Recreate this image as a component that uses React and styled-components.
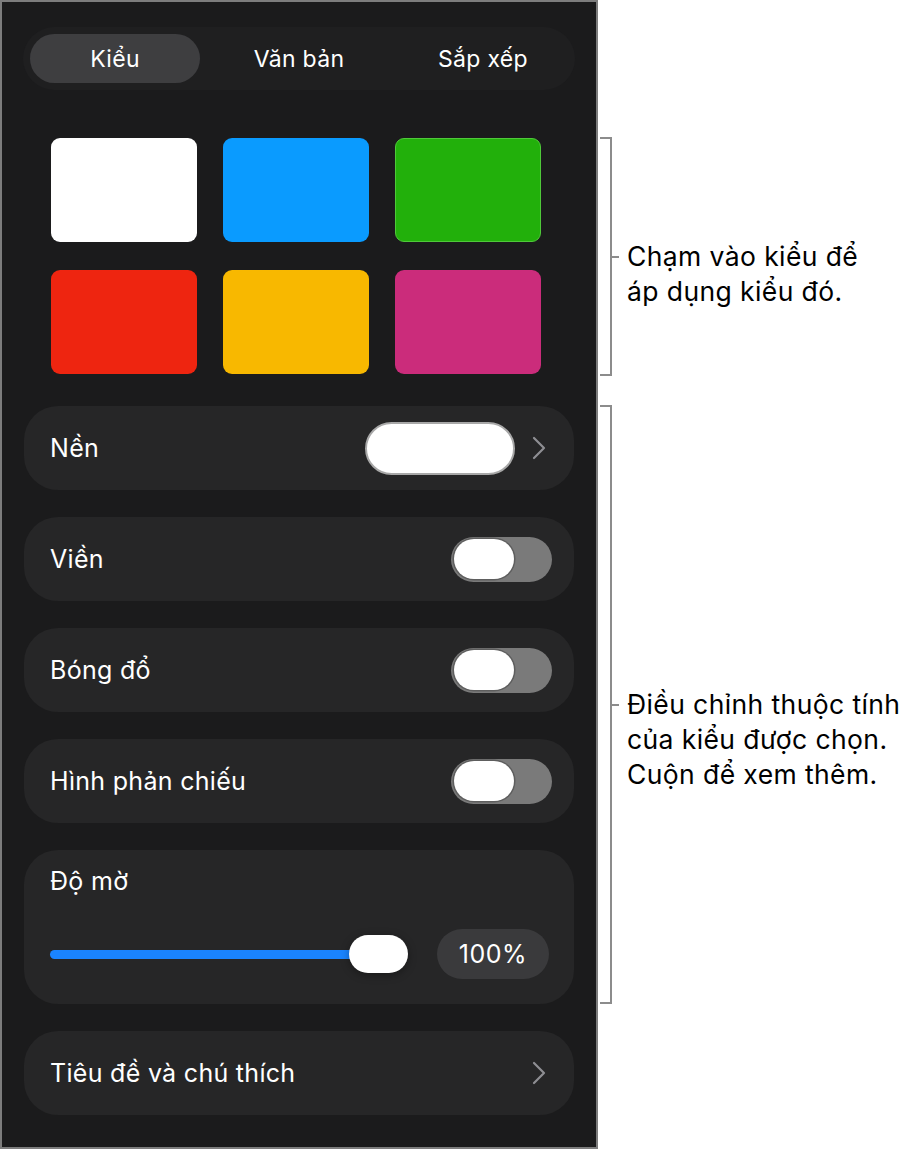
import React from "react";
import styled, { createGlobalStyle } from "styled-components";

const Global = createGlobalStyle`
  html, body { margin: 0; padding: 0; background: #ffffff; }
  body {
    font-family: Inter, "Noto Sans", "Liberation Sans", sans-serif;
    -webkit-font-smoothing: antialiased;
  }
`;

const Page = styled.div`
  display: flex;
  align-items: flex-start;
  width: 916px;
  height: 1151px;
  overflow: hidden;
`;

const Panel = styled.div`
  box-sizing: border-box;
  flex: none;
  width: 598px;
  height: 1149px;
  background: #1b1b1c;
  border: 2px solid #7d7d7d;
  padding: 25px 22px 0;
  display: flex;
  flex-direction: column;
`;

const Segmented = styled.div`
  display: grid;
  grid-template-columns: repeat(3, 1fr);
  height: 63px;
  margin: 0 -1px;
  border-radius: 32px;
  background: #1f1f20;
`;

const Tab = styled.div`
  display: flex;
  padding: 7px;
`;

const TabPill = styled.div`
  flex: 1;
  display: flex;
  align-items: center;
  justify-content: center;
  border-radius: 25px;
  background: ${(p) => (p.$active ? "#3e3e40" : "transparent")};
  color: #ffffff;
  font-size: 23px;
  letter-spacing: 0.3px;
  font-weight: 400;
`;

const Swatches = styled.div`
  display: grid;
  grid-template-columns: repeat(3, 146px);
  grid-auto-rows: 104px;
  column-gap: 26px;
  row-gap: 28px;
  margin: 48px 0 0 27px;
`;

const Swatch = styled.div`
  box-sizing: border-box;
  border-radius: 9px;
  background: ${(p) => p.$color};
  border: 1px solid ${(p) => p.$edge || "transparent"};
`;

const List = styled.div`
  display: flex;
  flex-direction: column;
  gap: 27px;
  margin-top: 32px;
`;

const Row = styled.div`
  box-sizing: border-box;
  height: 84px;
  display: flex;
  align-items: center;
  justify-content: space-between;
  padding: 0 22px 0 26px;
  border-radius: 34px;
  background: #262627;
`;

const Label = styled.div`
  color: #ffffff;
  font-size: 25px;
  letter-spacing: 0.3px;
  line-height: 30px;
`;

const Trailing = styled.div`
  display: flex;
  align-items: center;
  gap: 17px;
`;

const ColorPill = styled.div`
  box-sizing: border-box;
  width: 150px;
  height: 53px;
  border-radius: 27px;
  background: #ffffff;
  border: 2px solid #a8a8a8;
`;

const ToggleTrack = styled.div`
  box-sizing: border-box;
  width: 101px;
  height: 45px;
  padding: 2.5px;
  border-radius: 23px;
  background: #7a7a7a;
  display: flex;
  align-items: center;
`;

const ToggleKnob = styled.div`
  width: 60px;
  height: 40px;
  border-radius: 20px;
  background: #ffffff;
  box-shadow: 0 0 0 1.5px #5e5e5e;
`;

const Card = styled.div`
  box-sizing: border-box;
  height: 154px;
  padding: 16px 25px 0 26px;
  border-radius: 34px;
  background: #262627;
`;

const SliderRow = styled.div`
  display: flex;
  align-items: center;
  gap: 29px;
  margin-top: 33px;
  height: 50px;
`;

const Slider = styled.div`
  flex: 1;
  display: flex;
  align-items: center;
`;

const Fill = styled.div`
  flex: 1;
  height: 9px;
  border-radius: 5px;
  background: #1a84ff;
  margin-right: -12px;
`;

const Thumb = styled.div`
  position: relative;
  width: 59px;
  height: 38px;
  border-radius: 19px;
  background: #ffffff;
  box-shadow: 0 2px 8px rgba(0, 0, 0, 0.35);
`;

const ValuePill = styled.div`
  width: 112px;
  height: 50px;
  border-radius: 25px;
  background: #3a3a3c;
  color: #ffffff;
  font-size: 25px;
  letter-spacing: 0.5px;
  display: flex;
  align-items: center;
  justify-content: center;
`;

const Notes = styled.div`
  display: flex;
  flex-direction: column;
  gap: 29px;
  padding-top: 137px;
  margin-left: 2px;
`;

const Callout = styled.div`
  display: flex;
  height: ${(p) => p.$h}px;
`;

const Bracket = styled.div`
  position: relative;
  box-sizing: border-box;
  flex: none;
  width: 12px;
  height: 100%;
  border: 2px solid #8c8c8c;
  border-left: none;
  &::after {
    content: "";
    position: absolute;
    left: 100%;
    top: calc(50% - 1px);
    width: 9px;
    height: 2px;
    background: #8c8c8c;
  }
`;

const NoteText = styled.div`
  margin-left: 15px;
  padding-top: ${(p) => p.$h / 2 - 18}px;
  color: #000000;
  font-size: 26.5px;
  letter-spacing: 0.4px;
  line-height: 35px;
  white-space: nowrap;
`;

const Chevron = () => (
  <svg width="14" height="24" viewBox="0 0 14 24" style={{ marginRight: 6 }}>
    <polyline
      points="2,2 12,12 2,22"
      fill="none"
      stroke="#8e8e93"
      strokeWidth="2.2"
      strokeLinecap="round"
      strokeLinejoin="round"
    />
  </svg>
);

const Toggle = () => (
  <ToggleTrack>
    <ToggleKnob />
  </ToggleTrack>
);

const swatches = [
  { c: "#ffffff" },
  { c: "#0a9bff" },
  { c: "#22b00b", e: "#4fc93a" },
  { c: "#ee2510" },
  { c: "#f8b800" },
  { c: "#cb2c7b" },
];

export default function App() {
  return (
    <>
      <Global />
      <Page>
        <Panel>
          <Segmented>
            <Tab>
              <TabPill $active>Kiểu</TabPill>
            </Tab>
            <Tab>
              <TabPill>Văn bản</TabPill>
            </Tab>
            <Tab>
              <TabPill>Sắp xếp</TabPill>
            </Tab>
          </Segmented>

          <Swatches>
            {swatches.map((s, i) => (
              <Swatch key={i} $color={s.c} $edge={s.e} />
            ))}
          </Swatches>

          <List>
            <Row>
              <Label>Nền</Label>
              <Trailing>
                <ColorPill />
                <Chevron />
              </Trailing>
            </Row>
            <Row>
              <Label>Viền</Label>
              <Toggle />
            </Row>
            <Row>
              <Label>Bóng đổ</Label>
              <Toggle />
            </Row>
            <Row>
              <Label>Hình phản chiếu</Label>
              <Toggle />
            </Row>
            <Card>
              <Label>Độ mờ</Label>
              <SliderRow>
                <Slider>
                  <Fill />
                  <Thumb />
                </Slider>
                <ValuePill>100%</ValuePill>
              </SliderRow>
            </Card>
            <Row>
              <Label>Tiêu đề và chú thích</Label>
              <Chevron />
            </Row>
          </List>
        </Panel>

        <Notes>
          <Callout $h={239}>
            <Bracket />
            <NoteText $h={239}>
              Chạm vào kiểu để
              <br />
              áp dụng kiểu đó.
            </NoteText>
          </Callout>
          <Callout $h={599}>
            <Bracket />
            <NoteText $h={599}>
              Điều chỉnh thuộc tính
              <br />
              của kiểu được chọn.
              <br />
              Cuộn để xem thêm.
            </NoteText>
          </Callout>
        </Notes>
      </Page>
    </>
  );
}
